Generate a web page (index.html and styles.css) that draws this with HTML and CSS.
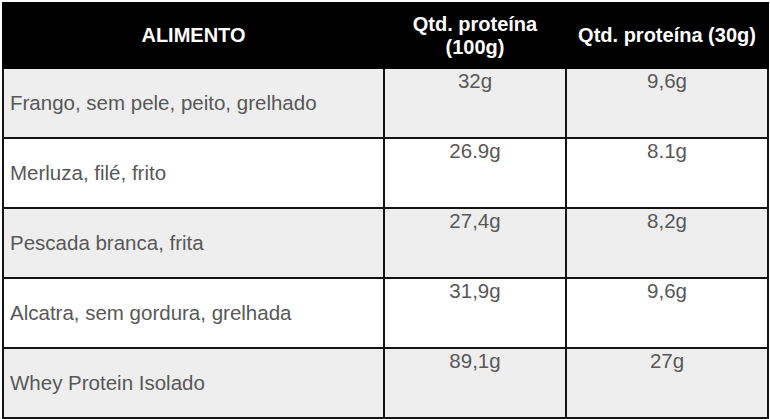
FILE: index.html
```html
<!DOCTYPE html>
<html lang="pt">
<head>
<meta charset="utf-8">
<link rel="stylesheet" href="styles.css">
</head>
<body>
<div class="wrap">
<table class="tbl">
  <colgroup>
    <col class="c1"><col class="c2"><col class="c3">
  </colgroup>
  <thead>
    <tr class="head">
      <th>ALIMENTO</th>
      <th>Qtd. proteína<br>(100g)</th>
      <th>Qtd. proteína (30g)</th>
    </tr>
  </thead>
  <tbody>
    <tr class="odd"><td class="name">Frango, sem pele, peito, grelhado</td><td class="num">32g</td><td class="num">9,6g</td></tr>
    <tr class="even"><td class="name">Merluza, filé, frito</td><td class="num">26.9g</td><td class="num">8.1g</td></tr>
    <tr class="odd"><td class="name">Pescada branca, frita</td><td class="num">27,4g</td><td class="num">8,2g</td></tr>
    <tr class="even"><td class="name">Alcatra, sem gordura, grelhada</td><td class="num">31,9g</td><td class="num">9,6g</td></tr>
    <tr class="odd"><td class="name">Whey Protein Isolado</td><td class="num">89,1g</td><td class="num">27g</td></tr>
  </tbody>
</table>
</div>
</body>
</html>
```

FILE: styles.css
```css
html, body {
  margin: 0;
  padding: 0;
  background: #ffffff;
}
.wrap {
  padding: 2px 0 0 2px;
}
.tbl {
  border-collapse: collapse;
  table-layout: fixed;
  width: 765px;
  font-family: "Liberation Sans", Arial, sans-serif;
  color: #585858;
}
.c1 { width: 381px; }
.c2 { width: 182px; }
.c3 { width: 202px; }
.tbl th, .tbl td {
  border: 2px solid #141414;
  padding: 0 6px;
}
.head {
  height: 65px;
  background: #000000;
}
.head th {
  color: #ffffff;
  font-weight: bold;
  font-size: 20px;
  line-height: 23px;
  text-align: center;
  vertical-align: middle;
  border-color: #000000;
}
.tbl tbody tr {
  height: 70px;
}
.odd { background: #eeeeee; }
.even { background: #ffffff; }
.name {
  font-size: 20.5px;
  line-height: 24px;
  vertical-align: middle;
  text-align: left;
  padding-left: 7px;
  padding-top: 0;
}
.num {
  font-size: 20.5px;
  line-height: 24px;
  vertical-align: top;
  text-align: center;
  padding-top: 11px;
}
```
